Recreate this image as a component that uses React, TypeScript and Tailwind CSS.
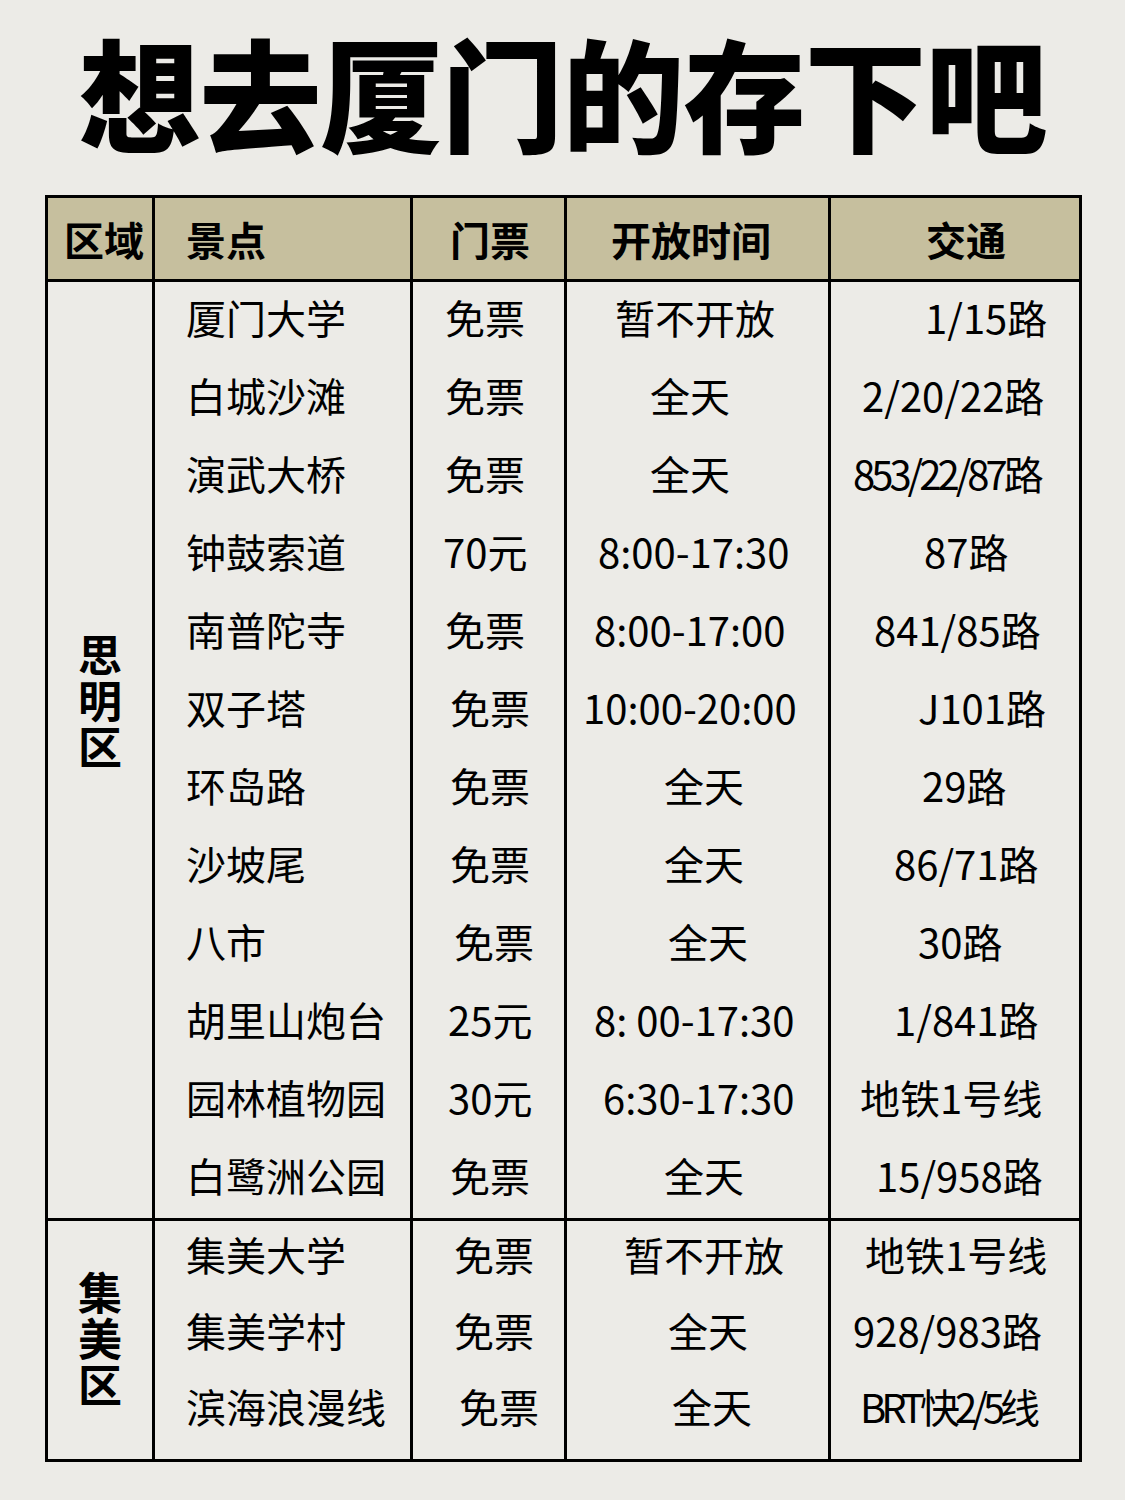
import React from "react";

type Row = {
  name: string;
  ticket: string;
  tp: string;
  time: string;
  hp: string;
  traffic: string;
  rp: string;
  track?: string;
};

const siming: Row[] = [
  { name: "厦门大学", ticket: "免票", tp: "pl-[32px]", time: "暂不开放", hp: "pl-[48px]", traffic: "1/15路", rp: "pl-[94px]" },
  { name: "白城沙滩", ticket: "免票", tp: "pl-[32px]", time: "全天", hp: "pl-[83px]", traffic: "2/20/22路", rp: "pl-[31px]" },
  { name: "演武大桥", ticket: "免票", tp: "pl-[32px]", time: "全天", hp: "pl-[83px]", traffic: "853/22/87路", rp: "pl-[22px]", track: "tracking-[-4px]" },
  { name: "钟鼓索道", ticket: "70元", tp: "pl-[30px]", time: "8:00-17:30", hp: "pl-[31px]", traffic: "87路", rp: "pl-[93px]" },
  { name: "南普陀寺", ticket: "免票", tp: "pl-[32px]", time: "8:00-17:00", hp: "pl-[27px]", traffic: "841/85路", rp: "pl-[43px]" },
  { name: "双子塔", ticket: "免票", tp: "pl-[37px]", time: "10:00-20:00", hp: "pl-[16px]", traffic: "J101路", rp: "pl-[87px]" },
  { name: "环岛路", ticket: "免票", tp: "pl-[37px]", time: "全天", hp: "pl-[97px]", traffic: "29路", rp: "pl-[91px]" },
  { name: "沙坡尾", ticket: "免票", tp: "pl-[37px]", time: "全天", hp: "pl-[97px]", traffic: "86/71路", rp: "pl-[63px]" },
  { name: "八市", ticket: "免票", tp: "pl-[41px]", time: "全天", hp: "pl-[101px]", traffic: "30路", rp: "pl-[87px]" },
  { name: "胡里山炮台", ticket: "25元", tp: "pl-[35px]", time: "8: 00-17:30", hp: "pl-[27px]", traffic: "1/841路", rp: "pl-[63px]" },
  { name: "园林植物园", ticket: "30元", tp: "pl-[35px]", time: "6:30-17:30", hp: "pl-[36px]", traffic: "地铁1号线", rp: "pl-[29px]" },
  { name: "白鹭洲公园", ticket: "免票", tp: "pl-[37px]", time: "全天", hp: "pl-[97px]", traffic: "15/958路", rp: "pl-[45px]" },
];

const jimei: Row[] = [
  { name: "集美大学", ticket: "免票", tp: "pl-[41px]", time: "暂不开放", hp: "pl-[57px]", traffic: "地铁1号线", rp: "pl-[34px]" },
  { name: "集美学村", ticket: "免票", tp: "pl-[41px]", time: "全天", hp: "pl-[101px]", traffic: "928/983路", rp: "pl-[22px]" },
  { name: "滨海浪漫线", ticket: "免票", tp: "pl-[46px]", time: "全天", hp: "pl-[105px]", traffic: "BRT快2/5线", rp: "pl-[29px]", track: "tracking-[-5px]" },
];

function BodyRow({ r, h, pad }: { r: Row; h: string; pad: string }) {
  return (
    <div className={`grid grid-cols-[258px_154px_264px_248px] ${h}`}>
      <div className={`flex items-center border-r-[3px] border-black pl-[31px] whitespace-nowrap ${pad}`}>{r.name}</div>
      <div className={`flex items-center border-r-[3px] border-black whitespace-nowrap ${r.tp} ${pad}`}>{r.ticket}</div>
      <div className={`flex items-center border-r-[3px] border-black whitespace-nowrap ${r.hp} ${pad}`}>{r.time}</div>
      <div className={`flex items-center whitespace-nowrap ${r.rp} ${pad} ${r.track ?? ""}`}>{r.traffic}</div>
    </div>
  );
}

export default function App() {
  return (
    <div
      className="w-[1125px] h-[1500px] bg-[#ecebe7] text-black overflow-hidden"
      style={{ fontFamily: '"Noto Sans CJK SC", "Noto Sans", sans-serif' }}
    >
      <div className="h-[195px] pt-[29px] text-center text-[122px] leading-none font-black tracking-[-1px]">
        想去厦门的存下吧
      </div>
      <div className="ml-[45px] w-[1037px] border-[3px] border-black text-[40px] leading-none">
        {/* header */}
        <div className="grid grid-cols-[107px_258px_154px_264px_248px] h-[84px] bg-[#c6bf9e] border-b-[3px] border-black font-bold">
          <div className="flex items-center border-r-[3px] border-black pl-[16px]">区域</div>
          <div className="flex items-center border-r-[3px] border-black pl-[31px]">景点</div>
          <div className="flex items-center border-r-[3px] border-black pl-[37px]">门票</div>
          <div className="flex items-center border-r-[3px] border-black pl-[44px]">开放时间</div>
          <div className="flex items-center pl-[95px]">交通</div>
        </div>
        {/* siming */}
        <div className="flex border-b-[3px] border-black">
          <div className="w-[107px] border-r-[3px] border-black flex items-center justify-center pb-[96px]">
            <div className="[writing-mode:vertical-rl] text-[44px] leading-none tracking-[2px] font-bold">
              思明区
            </div>
          </div>
          <div className="flex flex-col">
            {siming.map((r) => (
              <BodyRow key={r.name} r={r} h="h-[78px]" pad="pb-[8px]" />
            ))}
          </div>
        </div>
        {/* jimei */}
        <div className="flex">
          <div className="w-[107px] border-r-[3px] border-black flex items-center justify-center">
            <div className="[writing-mode:vertical-rl] text-[44px] leading-none tracking-[2px] font-bold">
              集美区
            </div>
          </div>
          <div className="flex flex-col">
            {jimei.map((r, i) => (
              <BodyRow
                key={r.name}
                r={r}
                h={i === jimei.length - 1 ? "h-[86px]" : "h-[76px]"}
                pad={i === jimei.length - 1 ? "pb-[20px]" : "pb-[10px]"}
              />
            ))}
          </div>
        </div>
      </div>
    </div>
  );
}
